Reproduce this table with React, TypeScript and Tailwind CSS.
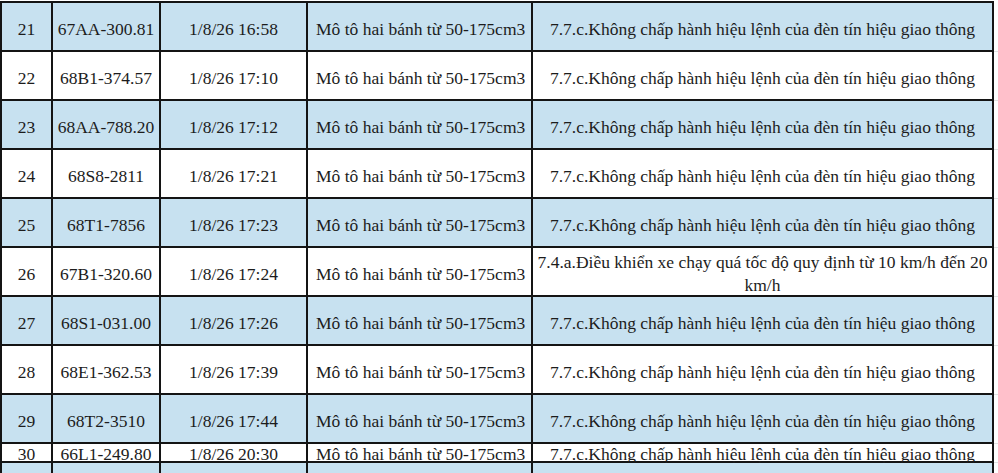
import React from "react";

type Row = {
  no: string;
  plate: string;
  time: string;
  vehicle: string;
  violation: React.ReactNode;
  blue: boolean;
  short?: boolean;
};

const VEHICLE = "Mô tô hai bánh từ 50-175cm3";
const RED_LIGHT = "7.7.c.Không chấp hành hiệu lệnh của đèn tín hiệu giao thông";

const rows: Row[] = [
  { no: "21", plate: "67AA-300.81", time: "1/8/26 16:58", vehicle: VEHICLE, violation: RED_LIGHT, blue: true },
  { no: "22", plate: "68B1-374.57", time: "1/8/26 17:10", vehicle: VEHICLE, violation: RED_LIGHT, blue: false },
  { no: "23", plate: "68AA-788.20", time: "1/8/26 17:12", vehicle: VEHICLE, violation: RED_LIGHT, blue: true },
  { no: "24", plate: "68S8-2811", time: "1/8/26 17:21", vehicle: VEHICLE, violation: RED_LIGHT, blue: false },
  { no: "25", plate: "68T1-7856", time: "1/8/26 17:23", vehicle: VEHICLE, violation: RED_LIGHT, blue: true },
  {
    no: "26",
    plate: "67B1-320.60",
    time: "1/8/26 17:24",
    vehicle: VEHICLE,
    violation: (
      <>
        7.4.a.Điều khiển xe chạy quá tốc độ quy định từ 10 km/h đến 20
        <br />
        km/h
      </>
    ),
    blue: false,
  },
  { no: "27", plate: "68S1-031.00", time: "1/8/26 17:26", vehicle: VEHICLE, violation: RED_LIGHT, blue: true },
  { no: "28", plate: "68E1-362.53", time: "1/8/26 17:39", vehicle: VEHICLE, violation: RED_LIGHT, blue: false },
  { no: "29", plate: "68T2-3510", time: "1/8/26 17:44", vehicle: VEHICLE, violation: RED_LIGHT, blue: true },
  { no: "30", plate: "66L1-249.80", time: "1/8/26 20:30", vehicle: VEHICLE, violation: RED_LIGHT, blue: false, short: true },
];

const cell = "flex items-center border-r-2 border-b-2 border-[#141414] shrink-0";

function TableRow({ row, first }: { row: Row; first: boolean }) {
  const bg = row.blue ? "bg-[#c7e1f0]" : "bg-white";
  const top = first ? "border-t-2" : "";
  const h = first ? "h-[51px]" : row.short ? "h-[19px]" : "h-[49px]";
  const pad = row.short ? "pt-[3px] leading-[17px]" : "pt-[4px] leading-[20px]";
  return (
    <div className={`flex ${h}`}>
      <div className={`${cell} ${bg} ${top} ${pad} border-l-2 w-[53px] justify-center`}>{row.no}</div>
      <div className={`${cell} ${bg} ${top} ${pad} w-[108px] justify-center`}>{row.plate}</div>
      <div className={`${cell} ${bg} ${top} ${pad} w-[147px] justify-center`}>{row.time}</div>
      <div className={`${cell} ${bg} ${top} ${pad} w-[225px] pl-[8px]`}>{row.vehicle}</div>
      <div className={`${cell} ${bg} ${top} ${pad} w-[461px] justify-center text-center`}>
        <span className={row.no === "26" ? "whitespace-nowrap leading-[23px]" : "whitespace-nowrap"}>{row.violation}</span>
      </div>
      <div className="flex-1 border-b border-[#e2e2e2]" />
    </div>
  );
}

export default function App() {
  return (
    <div className="w-[998px] h-[473px] overflow-hidden bg-white pt-px font-['Liberation_Serif',serif] text-[17.5px] text-[#1c1c1c]">
      {rows.map((r, i) => (
        <TableRow key={r.no} row={r} first={i === 0} />
      ))}
      <div className="flex h-[20px]">
        <div className={`${cell} bg-[#c7e1f0] border-l-2 w-[53px]`} />
        <div className={`${cell} bg-[#c7e1f0] w-[108px]`} />
        <div className={`${cell} bg-[#c7e1f0] w-[147px]`} />
        <div className={`${cell} bg-[#c7e1f0] w-[225px]`} />
        <div className={`${cell} bg-[#c7e1f0] w-[461px]`} />
        <div className="flex-1" />
      </div>
    </div>
  );
}
